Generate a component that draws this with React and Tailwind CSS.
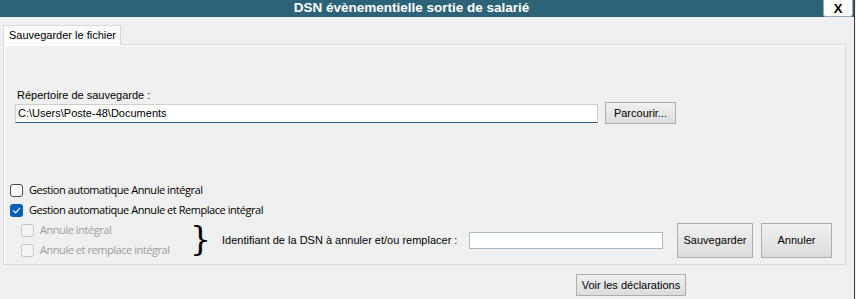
import React from 'react'

function CheckBox({ checked, disabled }) {
  if (checked) {
    return (
      <span className="w-[13px] h-[13px] rounded-[3px] bg-[#005fb8] flex items-center justify-center shrink-0">
        <svg width="9" height="9" viewBox="0 0 9 9" fill="none">
          <path d="M1.5 4.8 L3.6 6.8 L7.6 2.4" stroke="white" strokeWidth="1.2" strokeLinecap="round" strokeLinejoin="round" />
        </svg>
      </span>
    )
  }
  return (
    <span
      className={`w-[13px] h-[13px] rounded-[3px] border shrink-0 ${disabled ? 'border-[#c6c6c6] bg-[#f5f5f5]' : 'border-[#4a4a4a] bg-[#fbfbfb]'}`}
    />
  )
}

function Option({ label, checked, disabled }) {
  return (
    <div className="h-[20px] flex items-center gap-[6px]">
      <CheckBox checked={checked} disabled={disabled} />
      <span className={`text-[11px] tracking-[-0.45px] font-['Open_Sans',sans-serif] ${disabled ? 'text-[#9d9d9d]' : 'text-black'}`}>{label}</span>
    </div>
  )
}

const btn =
  'border border-[#adadad] bg-gradient-to-b from-[#f1f1f1] to-[#dcdcdc] text-[11px] text-black flex items-center justify-center'

export default function App() {
  return (
    <div className="w-[856px] h-[299px] bg-[#f0f0f0] overflow-hidden font-['Liberation_Sans',Arial,sans-serif] text-[11px] text-black">
      <div className="w-[855px] h-full border-r border-[#3c3c3c] flex flex-col">
        {/* Title bar */}
        <div className="h-[17px] bg-[#2d6378] flex">
          <div className="flex-1 flex items-center justify-center text-white font-bold text-[13.5px]">
            DSN évènementielle sortie de salarié
          </div>
          <button className="w-[30px] mr-[1px] bg-white rounded-b-[3px] border border-t-0 border-[#9aa8b0] font-bold text-[13px] leading-none text-black">
            X
          </button>
        </div>

        {/* Tab */}
        <div className="mt-[8px] ml-[3px] w-[118px] h-[20px] -mb-px relative z-10 bg-[#fbfbfb] border border-b-0 border-[#d9d9d9] flex items-center pl-[5px]">
          Sauvegarder le fichier
        </div>

        {/* Panel */}
        <div className="ml-[3px] w-[843px] h-[221px] border border-[#dadada] shadow-[inset_1px_1px_0_#ffffff] flex flex-col">
          <div className="pt-[44px] px-[11px]">
            <div className="ml-[2px] h-[13px] leading-[13px]">Répertoire de sauvegarde :</div>
            <div className="flex items-center gap-[7px] h-[22px]">
              <div className="w-[583px] h-[19px] bg-white border border-[#cfcfcf] border-b-[#2f5f7c] flex items-center pl-[2px]">
                C:\Users\Poste-48\Documents
              </div>
              <button className={`${btn} w-[71px] h-[22px]`}>Parcourir...</button>
            </div>
          </div>

          <div className="mt-[56px] pl-[6px]">
            <Option label="Gestion automatique Annule intégral" />
            <Option label="Gestion automatique Annule et Remplace intégral" checked />
          </div>

          <div className="flex items-center h-[40px] pl-[17px]">
            <div className="w-[169px] flex flex-col">
              <Option label="Annule intégral" disabled />
              <Option label="Annule et remplace intégral" disabled />
            </div>
            <span className="w-[13px] text-[33px] leading-none font-['DejaVu_Serif',serif] -mt-[4px]">{'}'}</span>
            <span className="ml-[19px] w-[247px]">Identifiant de la DSN à annuler et/ou remplacer :</span>
            <div className="w-[194px] h-[17px] bg-white border border-[#a9b9c5]" />
            <button className={`${btn} ml-[14px] w-[76px] h-[35px]`}>Sauvegarder</button>
            <button className={`${btn} ml-[8px] w-[71px] h-[35px]`}>Annuler</button>
          </div>
        </div>

        <div className="mt-[9px] ml-[576px]">
          <button className={`${btn} w-[110px] h-[22px]`}>Voir les déclarations</button>
        </div>
      </div>
    </div>
  )
}
